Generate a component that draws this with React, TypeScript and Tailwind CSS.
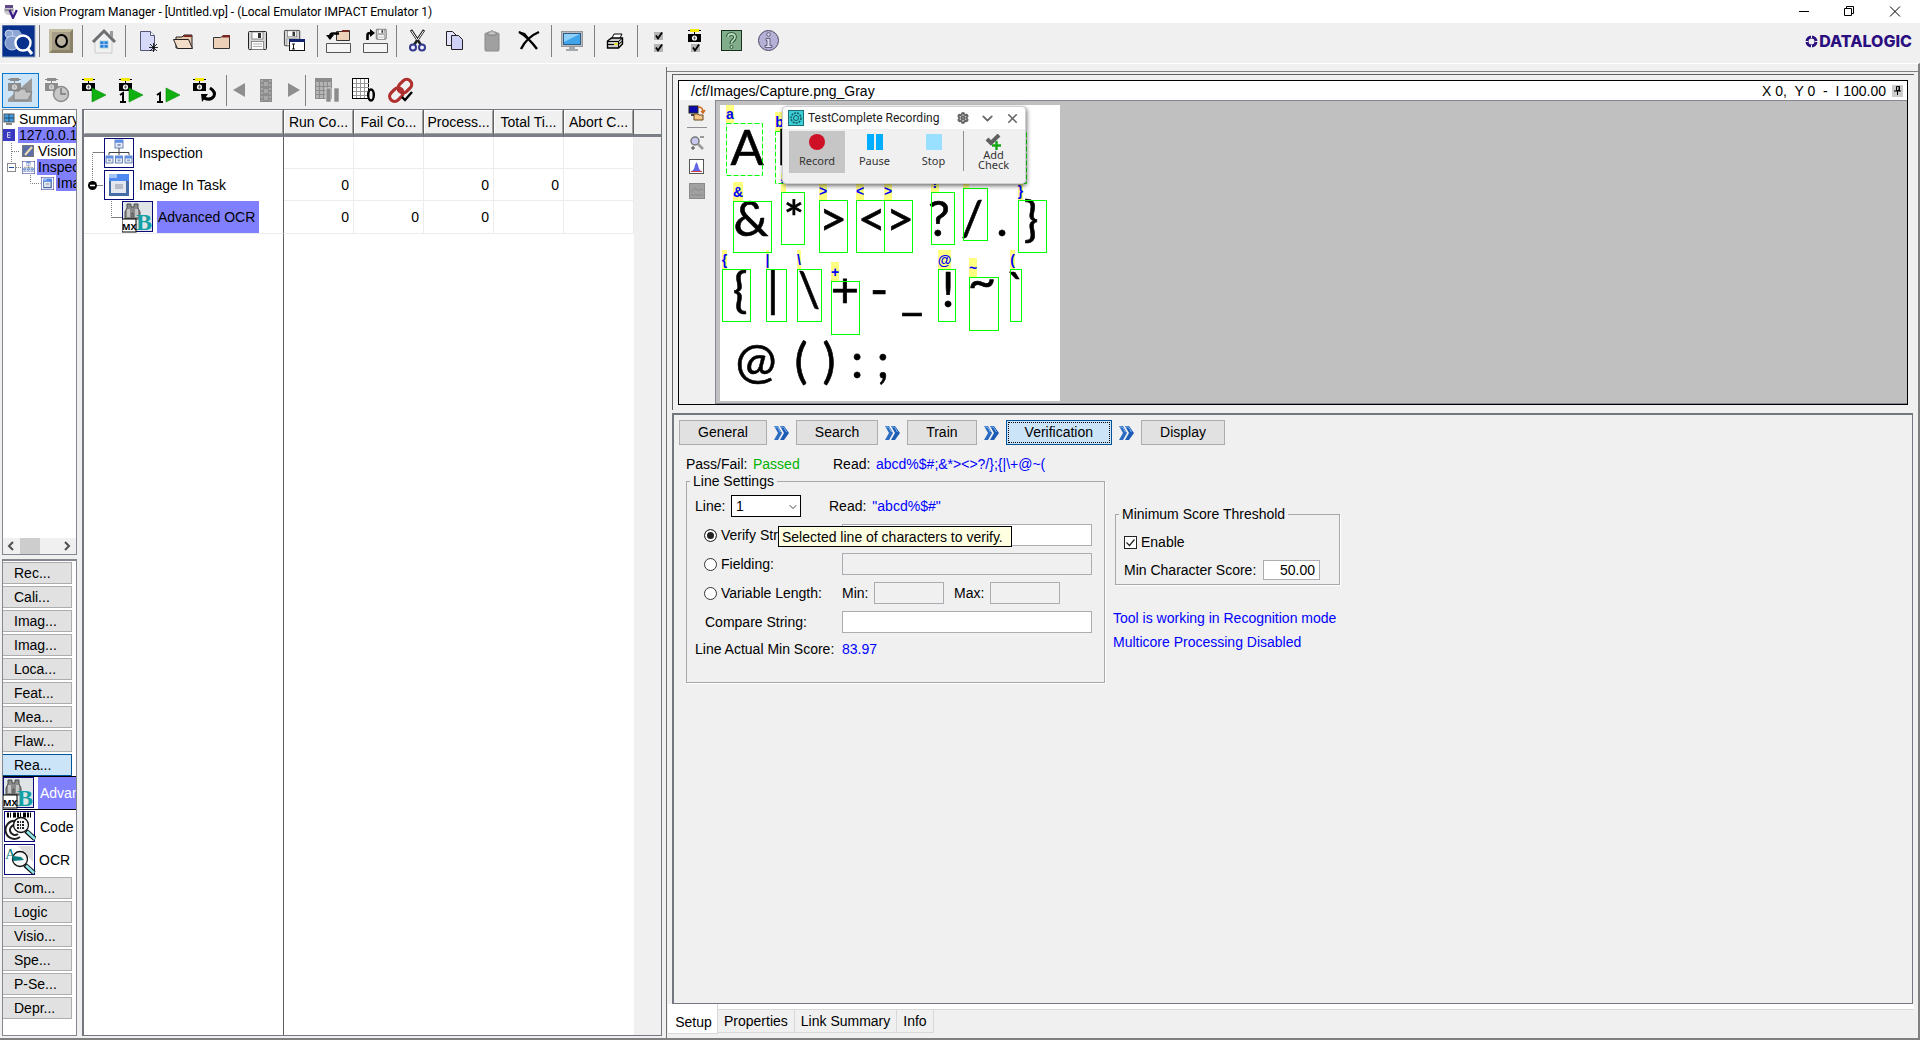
import React from 'react';
import { Settings, ChevronDown, X } from 'lucide-react';

type Kids = { children?: React.ReactNode };

/* ---------- shared icon pieces ---------- */

function Glyph({ x, y, w, h, children }: Kids & { x: number; y: number; w: number; h: number }) {
  return (
    <svg width={w} height={h} viewBox={`${x} ${y} ${w} ${h}`} className="block shrink-0" aria-hidden="true">
      {children}
    </svg>
  );
}

function Camera({ x, y, gray = false }: { x: number; y: number; gray?: boolean }) {
  const dark = gray ? '#8c8c8c' : '#000';
  return (
    <g>
      <path d={`M${x} ${y + 1.5}h13M${x + 6.5} ${y}v5`} stroke={dark} strokeWidth="1" />
      <rect x={x + 2} y={y} width="9" height="3" fill={gray ? '#8c8c8c' : '#f5e900'} />
      <rect x={x} y={y + 5} width="13" height="8" fill={dark} />
      <circle cx={x + 6.5} cy={y + 9} r="2.6" fill={gray ? '#d8d8d8' : '#fff'} />
      <path d={`M${x + 6.5} ${y + 7.4}v3.2M${x + 4.9} ${y + 9}h3.2`} stroke={gray ? '#aaa' : '#444'} strokeWidth=".8" />
    </g>
  );
}

function Play({ x, y }: { x: number; y: number }) {
  return <path d={`M${x} ${y}l14 7-14 7z`} fill="#10b010" stroke="#0a8a0a" strokeWidth=".6" />;
}

function Tick({ x, y }: { x: number; y: number }) {
  return (
    <g>
      <rect x={x} y={y} width="9" height="8" fill="#b4b4b4" />
      <path d={`M${x + 2} ${y + 3.5}l2 3 4-6`} stroke="#000" strokeWidth="1.8" fill="none" />
    </g>
  );
}

function Floppy({ x, y, s = 1 }: { x: number; y: number; s?: number }) {
  return (
    <g transform={`translate(${x} ${y}) scale(${s})`}>
      <rect x=".5" y=".5" width="18" height="18" rx="1" fill="#d4d4d4" stroke="#222" />
      <rect x="4" y="1" width="11" height="7" fill="#fff" stroke="#666" strokeWidth=".7" />
      <rect x="10" y="2" width="3" height="5" fill="#333" />
      <rect x="3.5" y="10.5" width="12" height="8" fill="#fff" stroke="#777" strokeWidth=".8" />
      <path d="M5 13h9M5 15.5h9" stroke="#999" strokeWidth=".8" />
    </g>
  );
}

function Sep() {
  return (
    <div className="flex h-8 w-[7px] shrink-0 justify-center">
      <div className="w-px bg-[#808080]" />
    </div>
  );
}

function ToolButton({ label, children, className = '' }: Kids & { label: string; className?: string }) {
  return (
    <button type="button" aria-label={label} title={label} className={'block shrink-0 ' + className}>
      {children}
    </button>
  );
}

/* ---------- title bar ---------- */

function TitleBar() {
  return (
    <header className="flex h-[23px] shrink-0 items-center bg-white pl-[3px]">
      <svg width="15" height="15" viewBox="0 0 15 15" aria-hidden="true">
        <path d="M2 1h8v3H2z" fill="#5b4a86" />
        <path d="M1 4h10v7H4L1 8z" fill="#c9c9cf" />
        <path d="M2 5h8v2H2z" fill="#8d8d99" />
        <path d="M6.5 6l3.5 8 3.8-8" stroke="#3c1d86" strokeWidth="2.2" fill="none" />
      </svg>
      <h1 className="ml-[5px] grow whitespace-nowrap font-[Roboto,sans-serif] text-[12px] leading-4 text-black">
        Vision Program Manager - [Untitled.vp] - (Local Emulator IMPACT Emulator 1)
      </h1>
      <ToolButton label="Minimize" className="w-[46px]">
        <svg width="46" height="22" viewBox="0 0 46 22"><path d="M17 10.500h10" stroke="#000" /></svg>
      </ToolButton>
      <ToolButton label="Restore" className="w-[46px]">
        <svg width="46" height="22" viewBox="0 0 46 22">
          <path d="M16.500 7.500h7v7h-7zM18.500 7.500v-2h7v7h-2" fill="none" stroke="#000" />
        </svg>
      </ToolButton>
      <ToolButton label="Close" className="w-[46px]">
        <svg width="46" height="22" viewBox="0 0 46 22"><path d="M16 5.500l10 10M26 5.500l-10 10" stroke="#000" /></svg>
      </ToolButton>
    </header>
  );
}

/* ---------- main toolbar ---------- */

function MainToolbar() {
  return (
    <div className="flex h-10 shrink-0 items-start pl-0.5 pt-0.5">
      <ToolButton label="Vision Program Manager">
        <Glyph x={2} y={25} w={34} h={33}>
          <rect x="2" y="25" width="33" height="32" fill="#06308c" stroke="#9ab" strokeWidth="1" />
          <path d="M9 30h10l3 4-3 4H8z" fill="#8ea6d4" />
          <circle cx="9" cy="34" r="4" fill="#8ea6d4" stroke="#dce6f7" strokeWidth=".8" />
          <circle cx="12" cy="43" r="7" fill="#7f9acb" stroke="#dce6f7" strokeWidth=".8" />
          <circle cx="23" cy="43" r="7.500" fill="#06308c" stroke="#fff" strokeWidth="2.400" />
          <path d="M28 49l4 5" stroke="#fff" strokeWidth="3" />
        </Glyph>
      </ToolButton>
      <Sep />
      <ToolButton label="Online">
        <Glyph x={43} y={25} w={36} h={32}>
          <rect x="49" y="29" width="24" height="24" fill="#8a8266" />
          <path d="M49 53V29h24l-3 3H52v18z" fill="#c3bb9f" />
          <rect x="52" y="32" width="18" height="18" fill="#a59d86" />
          <ellipse cx="61.500" cy="41" rx="5.500" ry="6" fill="#b8b29e" stroke="#000" strokeWidth="2" />
        </Glyph>
      </ToolButton>
      <Sep />
      <ToolButton label="Home">
        <Glyph x={86} y={25} w={36} h={32}>
          <path d="M95 39l9-8 8 8v14H95z" fill="#f1f1f1" stroke="#bbb" strokeWidth=".7" />
          <path d="M110 31h3v7l-3-3z" fill="#999" />
          <path d="M93 42l11-11 11 11" fill="none" stroke="#6d7073" strokeWidth="3" />
          <rect x="100" y="41" width="8" height="7" fill="#2f80dc" stroke="#9cc" strokeWidth=".7" />
          <path d="M104 41v7M100 44.500h8" stroke="#bfe0ff" strokeWidth=".8" />
        </Glyph>
      </ToolButton>
      <Sep />
      <ToolButton label="New">
        <Glyph x={129} y={25} w={37} h={32}>
          <path d="M140.500 31.500h10l4 4v15h-14z" fill="#d6d9f8" stroke="#55557a" />
          <path d="M150.500 31.500v4h4" fill="#fff" stroke="#55557a" />
          <path d="M149 47.500h9M153.500 43v9M150 44l7 7M157 44l-7 7" stroke="#111" strokeWidth=".9" />
        </Glyph>
      </ToolButton>
      <ToolButton label="Open">
        <Glyph x={166} y={25} w={37} h={32}>
          <path d="M176 48V37h6l2-2h8v13z" fill="#e6c9ae" stroke="#222" />
          <path d="M184 35h8v2h-9z" fill="#7a2a22" />
          <path d="M173.500 39.500h15l4 9h-15z" fill="#f2ddc9" stroke="#222" />
        </Glyph>
      </ToolButton>
      <ToolButton label="Close program">
        <Glyph x={203} y={25} w={37} h={32}>
          <path d="M213.500 48.500v-11h7l3-2h6v13z" fill="#ecd0b8" stroke="#333" />
          <path d="M223 35h7v2.500h-8z" fill="#7a2a22" />
        </Glyph>
      </ToolButton>
      <ToolButton label="Save">
        <Glyph x={240} y={25} w={37} h={32}><Floppy x={248} y={31} /></Glyph>
      </ToolButton>
      <ToolButton label="Save as">
        <Glyph x={277} y={25} w={37} h={32}>
          <Floppy x={284} y={30} s={0.85} />
          <rect x="289.500" y="39.500" width="15" height="11" fill="#fff" stroke="#111" />
          <rect x="289" y="39" width="16" height="3" fill="#14246e" />
          <path d="M292 44h3M292 49h3M293.500 44v5" stroke="#000" strokeWidth=".9" />
        </Glyph>
      </ToolButton>
      <Sep />
      <ToolButton label="Load from device">
        <Glyph x={321} y={25} w={36} h={32}>
          <path d="M336.500 40.500v-9h6l1-1h6v10z" fill="#ecd0b8" stroke="#333" />
          <path d="M342 30h7v2h-7z" fill="#7a2a22" />
          <path d="M339 33.500h-6q-3 0-3 4" fill="none" stroke="#000" strokeWidth="2.600" />
          <path d="M326 35h8l-4 5z" />
          <path d="M326.500 52.500v-9h24v9z" fill="#f4f4f4" stroke="#555" />
        </Glyph>
      </ToolButton>
      <ToolButton label="Save to device">
        <Glyph x={357} y={25} w={36} h={32}>
          <Floppy x={376} y={29} s={0.55} />
          <path d="M367.500 40v-5q0-2 3-2" fill="none" stroke="#000" strokeWidth="2.600" />
          <path d="M370 29l5 4-5 4z" />
          <path d="M363.500 52.500v-9h24v9z" fill="#f4f4f4" stroke="#555" />
        </Glyph>
      </ToolButton>
      <Sep />
      <ToolButton label="Cut">
        <Glyph x={400} y={25} w={37} h={32}>
          <path d="M411 30l10 15M424 30l-10 15" stroke="#222" strokeWidth="2.600" />
          <path d="M411.500 31l6 9M423.500 31l-6 9" stroke="#fff" strokeWidth="1" />
          <circle cx="413" cy="47.500" r="3" fill="#eef" stroke="#33398c" strokeWidth="2" />
          <circle cx="422" cy="47.500" r="3" fill="#eef" stroke="#33398c" strokeWidth="2" />
        </Glyph>
      </ToolButton>
      <ToolButton label="Copy">
        <Glyph x={437} y={25} w={37} h={32}>
          <path d="M446.500 31.500h6l4 4v10h-10z" fill="#e3e4fb" stroke="#222" />
          <path d="M451.500 35.500h7l4 4v10h-11z" fill="#cfd2f6" stroke="#222" />
        </Glyph>
      </ToolButton>
      <ToolButton label="Paste">
        <Glyph x={474} y={25} w={37} h={32}>
          <rect x="485" y="33" width="14" height="18" rx="1" fill="#a0a0a0" stroke="#8a8a8a" />
          <path d="M488 35v-3h2q2-3 4 0h2v3z" fill="#c5c5c5" stroke="#777" strokeWidth=".8" />
        </Glyph>
      </ToolButton>
      <ToolButton label="Delete">
        <Glyph x={511} y={25} w={37} h={32}>
          <path d="M519 32q9 5 18 17M539 32q-12 5-18 17" fill="none" stroke="#000" strokeWidth="2.400" />
          <path d="M518 31l7 2 5 6z" />
        </Glyph>
      </ToolButton>
      <Sep />
      <ToolButton label="Display">
        <Glyph x={555} y={25} w={36} h={32}>
          <rect x="561.500" y="31.500" width="21" height="15" fill="#b9bdc2" stroke="#999" />
          <rect x="563.500" y="33.500" width="17" height="11" fill="#3fa4ea" stroke="#2b5b86" />
          <path d="M564 34h16l-16 8z" fill="#8fd0fb" />
          <path d="M569 47h6v2h-6zM566 49h12v2h-12z" fill="#a5a8ac" />
        </Glyph>
      </ToolButton>
      <Sep />
      <ToolButton label="Print">
        <Glyph x={598} y={25} w={36} h={32}>
          <path d="M611 40l3-6h8l-3 6z" fill="#fff" stroke="#000" />
          <path d="M607.500 41l4-3h11v6l-4 4h-11z" fill="#ccc" stroke="#000" strokeWidth="1.400" />
          <path d="M607.500 41.500h11l3.500-3M608 44.500h10l4-3M618.500 41v7" fill="none" stroke="#000" />
          <rect x="614" y="43" width="4" height="2" fill="#e8dc30" />
        </Glyph>
      </ToolButton>
      <Sep />
      <ToolButton label="Check all">
        <Glyph x={641} y={25} w={37} h={32}><Tick x={654} y={32} /><Tick x={654} y={44} /></Glyph>
      </ToolButton>
      <ToolButton label="Check camera">
        <Glyph x={678} y={25} w={37} h={32}><Camera x={688} y={29} /><Tick x={691} y={44} /></Glyph>
      </ToolButton>
      <ToolButton label="Help">
        <Glyph x={715} y={25} w={37} h={32}>
          <rect x="721.500" y="30.500" width="20" height="20" fill="#82ad8b" stroke="#16321d" />
          <path d="M728 37q0-3 3.500-3t3.500 3q0 2-2 3.500t-1.500 3" fill="none" stroke="#234a2c" strokeWidth="3.600" />
          <path d="M728 37q0-3 3.500-3t3.500 3q0 2-2 3.500t-1.500 3" fill="none" stroke="#b8dcbf" strokeWidth="1.800" />
          <circle cx="731.500" cy="47" r="1.500" fill="#b8dcbf" stroke="#234a2c" strokeWidth=".8" />
        </Glyph>
      </ToolButton>
      <ToolButton label="About">
        <Glyph x={752} y={25} w={37} h={32}>
          <circle cx="768.500" cy="40.500" r="10" fill="#b4b0d6" stroke="#4c4a66" />
          <circle cx="768.500" cy="34.500" r="1.800" fill="#dcd9f2" stroke="#4c4a66" strokeWidth=".8" />
          <path d="M766 38.500h4v7h2v2h-7v-2h2v-5h-1z" fill="#dcd9f2" stroke="#4c4a66" strokeWidth=".8" />
        </Glyph>
      </ToolButton>
      <div className="mt-[7px] ml-auto mr-2 flex items-center gap-px text-[#2b0f80]">
        <svg width="13" height="13" viewBox="0 0 13 13" aria-hidden="true">
          <circle cx="6.500" cy="6.500" r="4.500" fill="none" stroke="currentColor" strokeWidth="3" />
          <path d="M6.500 0v3M6.500 10v3M0 6.500h3M10 6.500h3" stroke="#f0f0f0" strokeWidth="1" />
        </svg>
        <span className="font-[Inter,sans-serif] text-[16px] font-extrabold leading-[18px]">DATALOGIC</span>
      </div>
    </div>
  );
}

/* ---------- run toolbar ---------- */

function RunToolbar() {
  return (
    <div className="flex h-[45px] shrink-0 items-end pb-px pl-0.5">
      <ToolButton label="Image source" className="border border-[#0078d7] bg-[#cce4f7]">
        <Glyph x={3} y={74} w={35} h={33}>
          <path d="M8 102V99l24-21v24z" fill="#9a9a9a" />
          <Camera x={8} y={78} gray />
          <path d="M14 100v-9h5l2-2h5v3h6l-4 8z" fill="#c4c4c4" stroke="#7d7d7d" />
        </Glyph>
      </ToolButton>
      <ToolButton label="Schedule">
        <Glyph x={39} y={73} w={37} h={35}>
          <Camera x={45} y={78} gray />
          <circle cx="61" cy="94" r="7.500" fill="#c8c8c8" stroke="#8c8c8c" strokeWidth="1.500" />
          <path d="M61 88v6h5" fill="none" stroke="#777" strokeWidth="1.400" />
        </Glyph>
      </ToolButton>
      <ToolButton label="Run continuously"><Glyph x={76} y={73} w={37} h={35}><Camera x={82} y={78} /><Play x={92} y={88} /></Glyph></ToolButton>
      <ToolButton label="Run once with acquire">
        <Glyph x={113} y={73} w={37} h={35}>
          <Camera x={119} y={78} /><Play x={129} y={88} />
          <path d="M120 95l3-2v9M120 102h6" stroke="#000" strokeWidth="2" fill="none" />
        </Glyph>
      </ToolButton>
      <ToolButton label="Run once">
        <Glyph x={150} y={73} w={37} h={35}>
          <Play x={166} y={88} />
          <path d="M157 95l3-2v9M157 102h6" stroke="#000" strokeWidth="2" fill="none" />
        </Glyph>
      </ToolButton>
      <ToolButton label="Repeat">
        <Glyph x={187} y={73} w={37} h={35}>
          <Camera x={193} y={78} />
          <path d="M210 88q6 4 4 8-3 5-10 2" fill="none" stroke="#000" strokeWidth="3" />
          <path d="M201 94h7l-6 8z" />
        </Glyph>
      </ToolButton>
      <Glyph x={224} y={73} w={5} h={35}><path d="M226.500 75v31" stroke="#808080" /></Glyph>
      <ToolButton label="Previous image"><Glyph x={229} y={73} w={24} h={35}><path d="M245 83v14l-12-7z" fill="#8e8e8e" /></Glyph></ToolButton>
      <ToolButton label="Film strip">
        <Glyph x={253} y={73} w={27} h={35}>
          <rect x="260" y="79" width="12" height="23" fill="#8c8c8c" />
          <path d="M262 80v21M270 80v21" stroke="#c4c4c4" strokeDasharray="2 2" />
          <path d="M264 82h4v4h-4zM264 89h4v4h-4zM264 96h4v4h-4z" fill="#a8a8a8" />
        </Glyph>
      </ToolButton>
      <ToolButton label="Next image"><Glyph x={280} y={73} w={23} h={35}><path d="M288 83v14l12-7z" fill="#8e8e8e" /></Glyph></ToolButton>
      <Glyph x={303} y={73} w={6} h={35}><path d="M305.500 75v31" stroke="#808080" /></Glyph>
      <ToolButton label="Pause statistics">
        <Glyph x={309} y={73} w={37} h={35}>
          <rect x="315.500" y="78.500" width="16" height="20" fill="#b4b4b4" stroke="#8c8c8c" />
          <path d="M316 80.500h16" stroke="#8c8c8c" strokeWidth="3" />
          <path d="M319.500 79v19M323.500 79v19M327.500 79v19M316 86.500h16M316 90.500h16M316 94.500h16" stroke="#8c8c8c" />
          <path d="M326 88h5v14h-5zM334 88h5v14h-5z" fill="#8c8c8c" stroke="#f0f0f0" strokeWidth=".6" />
        </Glyph>
      </ToolButton>
      <ToolButton label="Reset statistics">
        <Glyph x={346} y={73} w={37} h={35}>
          <rect x="352.500" y="78.500" width="16" height="20" fill="#fff" stroke="#000" />
          <path d="M356.500 79v19M360.500 79v19M364.500 79v19M353 83.500h16M353 87.500h16M353 91.500h16M353 95.500h16" stroke="#999" />
          <ellipse cx="371" cy="95" rx="2.800" ry="5.500" fill="#f0f0f0" stroke="#000" strokeWidth="2.400" />
        </Glyph>
      </ToolButton>
      <ToolButton label="Validate links">
        <Glyph x={383} y={73} w={37} h={35}>
          <g transform="rotate(-45 401 90)" fill="none" stroke="#b03030" strokeWidth="3.200">
            <rect x="387" y="85" width="15" height="10" rx="5" />
            <rect x="399" y="85" width="15" height="10" rx="5" />
          </g>
          <path d="M402 97l3 3 7-8" fill="none" stroke="#000" strokeWidth="2.400" />
        </Glyph>
      </ToolButton>
    </div>
  );
}

/* ---------- pictures for tasks and tools ---------- */

function MiniWindow({ x, y, w, h }: { x: number; y: number; w: number; h: number }) {
  return (
    <g>
      <rect x={x} y={y} width={w} height={h} fill="#e8ecf4" stroke="#4a68a8" strokeWidth=".8" />
      <rect x={x} y={y} width={w} height={h * 0.35} fill="#5d8fe6" />
      <rect x={x + w * 0.3} y={y + h * 0.5} width={w * 0.4} height={h * 0.25} fill="#8c9cc0" />
    </g>
  );
}

function InspectionPic({ size }: { size: number }) {
  return (
    <svg width={size} height={size} viewBox="0 0 30 30" className="block shrink-0" aria-hidden="true">
      <rect x=".5" y=".5" width="29" height="29" fill="#fff" stroke="#0a0a78" />
      <path d="M15 10v7M5 17v-2.500h20V17" stroke="#444" fill="none" />
      <MiniWindow x={11} y={2} w={8} h={8} />
      <MiniWindow x={2} y={18} w={7} h={7} />
      <MiniWindow x={11.5} y={18} w={7} h={7} />
      <MiniWindow x={21} y={18} w={7} h={7} />
    </svg>
  );
}

function TaskPic({ size }: { size: number }) {
  return (
    <svg width={size} height={size} viewBox="0 0 30 30" className="block shrink-0" aria-hidden="true">
      <rect x=".5" y=".5" width="29" height="29" fill="#fff" stroke="#0a0a78" />
      <rect x="5" y="4" width="20" height="22" fill="#466ca8" />
      <rect x="5" y="4" width="20" height="7" fill="#4f8af0" />
      <rect x="5" y="4" width="8" height="4" fill="#a4c4f8" />
      <rect x="7" y="11" width="15" height="12" fill="#e4e8ee" />
      <rect x="11" y="14" width="8" height="5" fill="#b6bcc8" />
    </svg>
  );
}

function OcrPic() {
  return (
    <svg width="32" height="32" viewBox="0 0 32 32" className="block shrink-0" aria-hidden="true">
      <rect x=".5" y=".5" width="30" height="30" fill="#dfe5e6" stroke="#0a0a78" />
      <path d="M5 3h4v3h3V3h4v4l2 4v7h-7v-6h-1v6H3v-7l2-4z" fill="#8a8a8a" stroke="#4d4d4d" />
      <path d="M5 8h3v8H5zM13 8h3v8h-3z" fill="#c4c4c4" />
      <text x="14" y="29" fontFamily="Liberation Serif, serif" fontWeight="700" fontSize="24" fill="#12a0a4">B</text>
      <rect x="0" y="18" width="14" height="13" fill="#fff" stroke="#000" />
      <text x="0" y="29" fontFamily="Noto Sans, sans-serif" fontWeight="700" fontSize="9">MX</text>
    </svg>
  );
}

function Lens({ cx, cy }: { cx: number; cy: number }) {
  return (
    <g>
      <path d={`M${cx + 5} ${cy + 6}l9 8`} stroke="#111" strokeWidth="5" />
      <path d={`M${cx + 6} ${cy + 6.5}l8 7.500`} stroke="#8fe6ea" strokeWidth="2.600" />
      <circle cx={cx} cy={cy} r="7.500" fill="#f4f4f4" fillOpacity=".85" stroke="#111" strokeWidth="1.300" />
    </g>
  );
}

function CodePic() {
  return (
    <svg width="32" height="32" viewBox="0 0 32 32" className="block shrink-0" aria-hidden="true">
      <rect x=".5" y=".5" width="30" height="30" fill="#fff" stroke="#0a0a78" />
      <path d="M3 4h26" stroke="#000" strokeWidth="5" strokeDasharray="2 1 1 2 3 1" />
      <path d="M12 10a9 9 0 1 0 4 16M11 14a5 5 0 1 0 3 9" stroke="#222" strokeWidth="2" fill="none" />
      <Lens cx={17} cy={14} />
      <path d="M13 11h8M13 14h8M13 17h8" stroke="#222" strokeWidth="2" strokeDasharray="2 1 1 1" />
    </svg>
  );
}

function FindTextPic() {
  return (
    <svg width="32" height="32" viewBox="0 0 32 32" className="block shrink-0" aria-hidden="true">
      <rect x=".5" y=".5" width="30" height="30" fill="#fff" stroke="#0a0a78" />
      <path d="M14 2h15v16z" fill="#ddd" />
      <Lens cx={16} cy={15} />
      <text x="1" y="15" fontFamily="Liberation Serif, serif" fontSize="15" fill="#0a7d80">A</text>
      <path d="M9 12l8 1 3 3-11 1z" fill="#0a7d80" />
    </svg>
  );
}

/* ---------- left column ---------- */

function TreePanel() {
  const row = 'flex h-4 items-center whitespace-nowrap leading-4';
  return (
    <section className="flex h-[446px] shrink-0 flex-col overflow-hidden border border-[#828790] bg-white pt-px">
      <div className={row}>
        <svg className="shrink-0" width="15" height="16" viewBox="0 0 15 16">
          <rect x="1" y="3" width="10" height="8" fill="#3f9be0" stroke="#555" /><path d="M1 7h10M6 3v8" stroke="#1c3a55" strokeWidth=".8" /><path d="M3 13h6" stroke="#888" strokeWidth="2" />
        </svg>
        <span className="px-px">Summary</span>
      </div>
      <div className={row}>
        <svg className="shrink-0" width="15" height="16" viewBox="0 0 15 16"><rect width="12" height="12" y="2" fill="#3838c0" /><path d="M7.500 5.500h-3v5h3M4.500 8h3" stroke="#dde" fill="none" strokeWidth=".9" /></svg>
        <span className="bg-[#8080ff] px-px">127.0.0.1</span>
      </div>
      <div className={row}>
        <svg className="shrink-0" width="34" height="16" viewBox="0 0 34 16">
          <path d="M8.500 0v16M9 8.500h8" stroke="#808080" strokeDasharray="1 1" />
          <rect x="19.500" y="2.500" width="11" height="11" fill="#5c6ea8" stroke="#777" /><path d="M22 12l7-8" stroke="#f0e0b0" strokeWidth="2" />
        </svg>
        <span className="px-px">Vision</span>
      </div>
      <div className={row}>
        <svg className="shrink-0" width="19" height="16" viewBox="0 0 19 16">
          <path d="M8.500 0v4M13 8.500h5" stroke="#808080" strokeDasharray="1 1" />
          <rect x="4.500" y="4.500" width="8" height="8" fill="#fff" stroke="#888" /><path d="M6 8.500h5" stroke="#244a9c" />
        </svg>
        <InspectionPic size={13} />
        <span className="ml-0.5 bg-[#8080ff] px-px">Inspection</span>
      </div>
      <div className={row}>
        <svg className="shrink-0" width="38" height="16" viewBox="0 0 38 16"><path d="M27.500 0v8.500h10" fill="none" stroke="#808080" strokeDasharray="1 1" /></svg>
        <TaskPic size={13} />
        <span className="ml-0.5 bg-[#8080ff] px-px">Image In Task</span>
      </div>
      <div className="mt-auto flex h-4 items-center bg-[#f0f0f0]">
        <svg width="17" height="16" viewBox="0 0 17 16"><path d="M10 4l-4 4 4 4" fill="none" stroke="#505050" strokeWidth="2" /></svg>
        <div className="h-4 w-5 bg-[#cdcdcd]" />
        <svg width="17" height="16" viewBox="0 0 17 16" className="ml-auto"><path d="M6 4l4 4-4 4" fill="none" stroke="#505050" strokeWidth="2" /></svg>
      </div>
    </section>
  );
}

function PaletteButton({ children, active = false }: Kids & { active?: boolean }) {
  return (
    <button
      type="button"
      className={
        'mb-0.5 block h-[22px] w-[69px] shrink-0 border border-l-0 pl-[11px] text-left leading-5 ' +
        (active ? 'border-[#005499] bg-[#cce4f7]' : 'border-[#adadad] bg-[#e1e1e1]')
      }
    >
      {children}
    </button>
  );
}

function Palette() {
  return (
    <section className="flex min-h-0 grow flex-col overflow-hidden whitespace-nowrap border border-t-2 border-[#828790] bg-white pt-px">
      {['Rec...', 'Cali...', 'Imag...', 'Imag...', 'Loca...', 'Feat...', 'Mea...', 'Flaw...'].map((t, i) => (
        <PaletteButton key={i}>{t}</PaletteButton>
      ))}
      <PaletteButton active>Rea...</PaletteButton>
      <button type="button" className="-mt-0.5 flex h-[34px] shrink-0 items-center border-y border-black">
        <OcrPic />
        <span className="ml-[3px] bg-[#8080ff] pl-0.5 leading-8 text-white">Advanced OCR</span>
      </button>
      <button type="button" className="flex h-[33px] shrink-0 items-center pl-px"><CodePic /><span className="ml-1">Code</span></button>
      <button type="button" className="mb-px flex h-[33px] shrink-0 items-center pl-px"><FindTextPic /><span className="ml-[3px]">OCR</span></button>
      {['Com...', 'Logic', 'Visio...', 'Spe...', 'P-Se...', 'Depr...'].map((t) => (
        <PaletteButton key={t}>{t}</PaletteButton>
      ))}
    </section>
  );
}

/* ---------- program table ---------- */

const rows = [
  { name: 'Inspection', values: ['', '', '', '', ''] },
  { name: 'Image In Task', values: ['0', '', '0', '0', ''] },
  { name: 'Advanced OCR', values: ['0', '0', '0', '', ''] },
];

function ProgramTable() {
  return (
    <section className="mr-0.5 flex min-w-0 grow flex-col border border-l-2 border-[#73777f] bg-white">
      <table className="w-full table-fixed border-separate border-spacing-0">
        <colgroup>
          <col className="w-[200px]" />
          <col className="w-[70px]" /><col className="w-[70px]" /><col className="w-[70px]" /><col className="w-[70px]" /><col className="w-[70px]" />
          <col />
        </colgroup>
        <thead>
          <tr className="h-[27px]">
            {['', 'Run Co...', 'Fail Co...', 'Process...', 'Total Ti...', 'Abort C...'].map((h, i) => (
              <th key={i} className="border-b-[3px] border-r border-b-[#7b7f87] border-r-[#606060] bg-[#f0f0f0] p-0 font-normal">
                <div className="h-6 border-b border-l border-r border-t border-b-[#a0a0a0] border-l-white border-r-[#a0a0a0] border-t-white leading-[22px]">{h}</div>
              </th>
            ))}
            <th className="border-b-[3px] border-b-[#7b7f87] bg-[#f0f0f0] p-0" />
          </tr>
        </thead>
        <tbody>
          {rows.map((r, i) => (
            <tr key={r.name} className="h-8">
              <td className={'border-r border-r-[#606060] p-0 ' + (i === 2 ? 'border-b border-b-[#ececec]' : '')}>
                <div className="flex h-8 items-center">
                  {i === 0 && <svg width="20" height="32" viewBox="0 0 20 32"><path d="M8.500 32V15.500" stroke="#808080" strokeDasharray="1 1" /><path d="M9 15.500h11" stroke="#808080" /></svg>}
                  {i === 1 && (
                    <svg width="20" height="32" viewBox="0 0 20 32">
                      <path d="M8.500 0v16" stroke="#808080" strokeDasharray="1 1" /><path d="M12 16.500h7" stroke="#808080" />
                      <circle cx="8.500" cy="16.500" r="4.500" /><path d="M6 16.500h5" stroke="#fff" strokeWidth="1.500" />
                    </svg>
                  )}
                  {i === 2 && <svg width="38" height="32" viewBox="0 0 38 32"><path d="M27.500 0v16" stroke="#808080" strokeDasharray="1 1" /><path d="M27 16.500h11" stroke="#808080" /></svg>}
                  {i === 0 && <InspectionPic size={30} />}
                  {i === 1 && <TaskPic size={30} />}
                  {i === 2 && <OcrPic />}
                  <span className={i === 2 ? 'ml-[3px] bg-[#8080ff] pl-px pr-1 leading-8' : 'ml-1 px-px'}>{r.name}</span>
                </div>
              </td>
              {r.values.map((v, j) => (
                <td key={j} className="border-b border-r border-[#ececec] p-0 pr-1 text-right">{v}</td>
              ))}
              <td className="bg-[#f0f0f0] p-0" />
            </tr>
          ))}
        </tbody>
      </table>
      <div className="flex grow">
        <div className="w-[200px] border-r border-[#606060]" />
        <div className="w-[350px]" />
        <div className="grow bg-[#f0f0f0]" />
      </div>
    </section>
  );
}

/* ---------- captured image with found characters ---------- */

const glyphs: [string, number, number][] = [
  ['A', 747, 165], ['b', 791, 165],
  ['&', 751, 236], ['*', 794, 236], ['>', 833, 236], ['<', 872, 236], ['>', 900, 236], ['?', 939, 236], ['/', 972, 236], ['.', 1002, 236], ['}', 1031, 236],
  ['{', 740, 307], ['|', 773, 307], ['\\', 809, 307], ['+', 845, 307], ['-', 879, 307], ['_', 912, 309], ['!', 948, 307], ['~', 982, 298], ['`', 1016, 307],
  ['@', 756, 378], ['(', 801, 378], [')', 829, 378], [':', 857, 378], [';', 883, 378],
];

const boxes: { t: string; x: number; y: number; w: number; h: number; lw: number; dash?: boolean }[] = [
  { t: 'a', x: 726, y: 123, w: 36, h: 52, lw: 8, dash: true },
  { t: 'b', x: 775, y: 131, w: 34, h: 52, lw: 9, dash: true },
  { t: '', x: 818, y: 131, w: 30, h: 52, lw: 0, dash: true },
  { t: '', x: 992, y: 131, w: 34, h: 52, lw: 0, dash: true },
  { t: '&', x: 733, y: 201, w: 38, h: 51, lw: 10 },
  { t: '*', x: 781, y: 192, w: 23, h: 52, lw: 5 },
  { t: '>', x: 819, y: 200, w: 28, h: 52, lw: 8 },
  { t: '<', x: 856, y: 200, w: 28, h: 52, lw: 8 },
  { t: '>', x: 884, y: 200, w: 28, h: 52, lw: 8 },
  { t: '?', x: 931, y: 192, w: 23, h: 52, lw: 8 },
  { t: '/', x: 963, y: 188, w: 24, h: 52, lw: 6 },
  { t: '}', x: 1018, y: 200, w: 28, h: 52, lw: 5 },
  { t: '{', x: 722, y: 269, w: 28, h: 52, lw: 5 },
  { t: '|', x: 766, y: 269, w: 20, h: 52, lw: 3 },
  { t: '\\', x: 797, y: 269, w: 24, h: 52, lw: 4 },
  { t: '+', x: 831, y: 281, w: 28, h: 53, lw: 8 },
  { t: '@', x: 938, y: 269, w: 17, h: 52, lw: 13 },
  { t: '~', x: 969, y: 277, w: 29, h: 53, lw: 8 },
  { t: '(', x: 1010, y: 269, w: 11, h: 52, lw: 5 },
];

function CapturedImage() {
  return (
    <svg width="340" height="296" viewBox="720 105 340 296" className="block bg-white" role="img" aria-label="Captured characters">
      {boxes.map((b, i) => (b.t ? <rect key={i} x={b.x} y={b.y - 19} width={b.lw} height="19" fill="#ffff80" /> : null))}
      <g fontFamily="Lato, sans-serif" fontSize="49" textAnchor="middle" fill="#000" stroke="#000" strokeWidth=".6">
        {glyphs.map(([c, x, y], i) => (
          <text key={i} x={x} y={y}>{c}</text>
        ))}
      </g>
      {boxes.map((b, i) => (
        <rect key={i} x={b.x + 0.5} y={b.y + 0.5} width={b.w} height={b.h} fill="none" stroke="#00ff00" strokeDasharray={b.dash ? '5 2' : undefined} />
      ))}
      <g fontFamily="Liberation Sans, sans-serif" fontSize="14" fontWeight="700" textAnchor="middle" fill="#0000ff">
        {boxes.map((b, i) => (b.t ? <text key={i} x={b.x + b.lw / 2} y={b.y - 4}>{b.t}</text> : null))}
      </g>
    </svg>
  );
}

function Recorder() {
  const label = "font-['Noto_Sans',sans-serif] text-[11px] leading-[14px] text-[#333]";
  return (
    <div className="absolute left-[66px] top-[5px] w-[244px] rounded-[4px] border border-[#d0d0d0] bg-[#f0f0f0] shadow-[1px_2px_4px_rgba(0,0,0,0.55)]">
      <div className="flex h-[22px] items-center rounded-t-[4px] bg-white pl-[5px]">
        <svg width="16" height="16" viewBox="0 0 16 16" aria-hidden="true">
          <rect x=".5" y=".5" width="15" height="15" fill="#3ccfd8" stroke="#1c6c72" />
          <circle cx="8" cy="8" r="5" fill="none" stroke="#14585e" strokeWidth="1.500" strokeDasharray="2 1" />
          <circle cx="8" cy="8" r="2.500" fill="none" stroke="#14585e" />
        </svg>
        <span className="ml-1 grow whitespace-nowrap font-[Roboto,sans-serif] text-[12px] leading-4 text-[#222]">TestComplete Recording</span>
        <button type="button" aria-label="Settings" className="flex w-[25px] justify-center text-[#666]"><Settings size={12} strokeWidth={4} /></button>
        <button type="button" aria-label="Collapse" className="flex w-[25px] justify-center text-[#666]"><ChevronDown size={17} strokeWidth={2.5} /></button>
        <button type="button" aria-label="Close recorder" className="flex w-[25px] justify-center text-[#666]"><X size={15} strokeWidth={2.5} /></button>
      </div>
      <div className="flex h-[54px] items-start pt-0.5">
        <button type="button" className="ml-1.5 flex h-[42px] w-14 flex-col items-center bg-[#c6c6c6] pt-[3px]">
          <svg width="16" height="16" viewBox="0 0 16 16"><circle cx="8" cy="8" r="8" fill="#ce1126" /></svg>
          <span className={'mt-1 ' + label}>Record</span>
        </button>
        <button type="button" className="flex h-[42px] w-[59px] flex-col items-center pt-[3px]">
          <svg width="16" height="16" viewBox="0 0 16 16"><path d="M0 0h7v16H0zM9 0h7v16H9z" fill="#00aeff" /></svg>
          <span className={'mt-1 ' + label}>Pause</span>
        </button>
        <button type="button" className="flex h-[42px] w-[59px] flex-col items-center pt-[3px]">
          <svg width="16" height="16" viewBox="0 0 16 16"><path d="M0 0h16v16H0z" fill="#99dfff" /></svg>
          <span className={'mt-1 ' + label}>Stop</span>
        </button>
        <div className="h-10 w-px bg-[#909090]" />
        <button type="button" className="flex h-[42px] w-[59px] flex-col items-center pt-[3px]">
          <svg width="18" height="16" viewBox="0 0 18 16"><path d="M2 5l4 4 8-8" fill="none" stroke="#606060" strokeWidth="4" /><path d="M11.500 7v9M7 11.500h9" stroke="#14a514" strokeWidth="2.400" /></svg>
          <span className="font-['Noto_Sans',sans-serif] text-[11px] leading-[10px] text-[#333]">Add<br />Check</span>
        </button>
      </div>
    </div>
  );
}

function ImagePane() {
  return (
    <section className="mr-1 border-l border-t border-[#606060] py-[5px] pl-[5px] pr-1.5">
      <div className="flex h-[325px] flex-col border border-black bg-white">
        <div className="flex h-[19px] shrink-0 items-center pl-3 pr-1 leading-[19px]">
          <span className="pt-0.5">/cf/Images/Capture.png_Gray</span>
          <span className="ml-auto whitespace-pre pt-0.5">X 0,  Y 0  -  I 100.00</span>
          <button type="button" aria-label="Pin" className="ml-1.5 flex h-3 w-[11px] items-center justify-center bg-[#ccc]">
            <svg width="9" height="11" viewBox="0 0 9 11"><path d="M3.500 1.500h3v4h-3zM1 6h7M4.500 6v4M6 1v5" fill="none" stroke="#000" /></svg>
          </button>
        </div>
        <div className="flex min-h-0 grow">
          <div className="flex w-9 shrink-0 flex-col items-center bg-[#f0f0f0] pt-[5px]">
            <ToolButton label="Swap image">
              <svg width="18" height="16" viewBox="0 0 18 16"><rect x="1" y="1" width="9" height="7" fill="#0a0ab0" stroke="#222" /><path d="M3 10h6" stroke="#444" strokeWidth="2" /><path d="M6 9h4l1 1h4v5H6z" fill="#f4c88a" stroke="#6b4518" /><path d="M10 2q5 0 5 5M13 6l2 2 2-3" fill="none" stroke="#d06a20" strokeWidth="1.500" /></svg>
            </ToolButton>
            <div className="mt-1.5 h-px w-5 bg-[#909090]" />
            <ToolButton label="Zoom" className="mt-[7px]">
              <svg width="16" height="16" viewBox="0 0 16 16"><circle cx="6" cy="6" r="4" fill="#c9c9f0" stroke="#777" strokeWidth="1.500" /><path d="M9 9l5 5" stroke="#999" strokeWidth="2.500" /><path d="M11 2h4M2 13h4M4 11v4" stroke="#444" /></svg>
            </ToolButton>
            <ToolButton label="Histogram" className="mt-2">
              <svg width="16" height="16" viewBox="0 0 16 16"><rect x=".5" y=".5" width="14" height="14" fill="#fff" stroke="#555" /><path d="M2 12q3 0 4-6l1.500-3L9 6q1 6 4 6z" fill="#6464e8" /><path d="M2 12.500h11" stroke="#d04040" /></svg>
            </ToolButton>
            <ToolButton label="Profile" className="mt-2">
              <svg width="16" height="16" viewBox="0 0 16 16"><rect x=".5" y=".5" width="15" height="15" fill="#a0a0a0" stroke="#8a8a8a" /><path d="M2 9l4-4 3 3 2-2 3 1M2 12h12" fill="none" stroke="#8a8a8a" /></svg>
            </ToolButton>
          </div>
          <div className="relative min-w-0 grow border border-r-0 border-[#828790] bg-[#c0c0c0] pl-1 pt-1">
            <CapturedImage />
            <Recorder />
          </div>
        </div>
      </div>
    </section>
  );
}

/* ---------- verification settings ---------- */

function StepArrow() {
  return (
    <svg width="29" height="14" viewBox="0 0 29 14" className="block shrink-0" aria-hidden="true">
      <path d="M7 0h4l4 7-4 7H7l4-7z" fill="#2b6cc0" />
      <path d="M13 0h4l5 7-5 7h-4l4-7z" fill="#1d5cb4" />
      <path d="M8 1h2.500l3 5M14 1h2.500l3 5" fill="none" stroke="#7db4ee" />
    </svg>
  );
}

function Step({ children, active = false }: Kids & { active?: boolean }) {
  return (
    <button
      type="button"
      className={
        'h-[25px] border px-px ' +
        (active ? 'border-[#005499] bg-[#cce4f7]' : 'border-[#adadad] bg-[#e1e1e1]')
      }
    >
      <span className={'block border px-4 leading-[19px] ' + (active ? 'border-dotted border-black' : 'border-transparent')}>{children}</span>
    </button>
  );
}

const field = 'h-[22px] border border-[#abadb3] bg-white px-1 outline-none disabled:bg-[#f0f0f0]';

function Radio({ id, checked = false }: { id: string; checked?: boolean }) {
  return (
    <input
      id={id}
      type="radio"
      name="mode"
      defaultChecked={checked}
      className="mr-1 h-[13px] w-[13px] shrink-0 appearance-none rounded-full border border-[#333] bg-white checked:bg-[#222] checked:shadow-[inset_0_0_0_2px_#fff]"
    />
  );
}

function LineSettings() {
  const row = 'flex h-[22px] items-center';
  return (
    <fieldset className="flex w-[419px] shrink-0 flex-col border border-[#a8a8a8] pb-6 pl-2 shadow-[1px_1px_0_#fff]">
      <legend className="-ml-[5px] px-[3px] leading-4">Line Settings</legend>
      <div className="flex flex-col gap-[7px] pt-1.5">
        <div className={row}>
          <label htmlFor="line" className="w-9">Line:</label>
          <div className="relative h-[22px] w-[70px]">
            <select id="line" className="h-full w-full appearance-none border border-black bg-white pl-1 outline-none">
              <option>1</option>
            </select>
            <ChevronDown size={12} className="pointer-events-none absolute right-0.5 top-1.5 text-[#444]" />
          </div>
          <span className="ml-7">Read:</span>
          <span className="ml-1.5 text-[#0000ff]">"abcd%$#"</span>
        </div>
        <div className={row + ' relative'}>
          <div className="flex w-[147px] items-center pl-[9px]">
            <Radio id="verify" checked />
            <label htmlFor="verify">Verify String:</label>
          </div>
          <input aria-label="Verify string" className={field + ' w-[250px]'} />
          <div role="tooltip" className="absolute left-[83px] top-0.5 z-10 h-[21px] w-[234px] whitespace-nowrap border border-black bg-[#ffffe1] px-[3px] leading-5">
            Selected line of characters to verify.
          </div>
        </div>
        <div className={row}>
          <div className="flex w-[147px] items-center pl-[9px]">
            <Radio id="fielding" />
            <label htmlFor="fielding">Fielding:</label>
          </div>
          <input aria-label="Fielding pattern" disabled className={field + ' w-[250px]'} />
        </div>
        <div className={row}>
          <div className="flex w-[147px] items-center pl-[9px]">
            <Radio id="variable" />
            <label htmlFor="variable">Variable Length:</label>
          </div>
          <label htmlFor="min" className="w-8">Min:</label>
          <input id="min" disabled className={field + ' w-[70px]'} />
          <label htmlFor="max" className="ml-2.5 w-9">Max:</label>
          <input id="max" disabled className={field + ' w-[70px]'} />
        </div>
        <div className={row}>
          <label htmlFor="compare" className="w-[147px] pl-2.5">Compare String:</label>
          <input id="compare" className={field + ' w-[250px]'} />
        </div>
        <div className="flex h-[18px] items-center">
          <span className="w-[147px]">Line Actual Min Score:</span>
          <span className="text-[#0000ff]">83.97</span>
        </div>
      </div>
    </fieldset>
  );
}

function ScoreThreshold() {
  return (
    <div className="mt-[33px]">
      <fieldset className="ml-0.5 w-[225px] border border-[#a8a8a8] pb-1 pl-2 shadow-[1px_1px_0_#fff]">
        <legend className="-ml-[5px] px-[3px] leading-4">Minimum Score Threshold</legend>
        <div className="mt-3 flex h-4 items-center">
          <span className="relative h-[13px] w-[13px]">
            <input id="enable" type="checkbox" defaultChecked className="block h-[13px] w-[13px] appearance-none border border-[#222] bg-white" />
            <svg width="13" height="13" viewBox="0 0 13 13" className="pointer-events-none absolute left-0 top-0"><path d="M2.500 6.500l3 3 5-6" fill="none" stroke="#222" strokeWidth="1.200" /></svg>
          </span>
          <label htmlFor="enable" className="ml-1">Enable</label>
        </div>
        <div className="mt-2.5 flex h-5 items-center">
          <label htmlFor="score" className="w-[139px] whitespace-nowrap">Min Character Score:</label>
          <input id="score" defaultValue="50.00" className="h-5 w-[57px] border border-[#abadb3] bg-white pr-1 text-right outline-none" />
        </div>
      </fieldset>
      <p className="mt-6 leading-[18px] text-[#0000ff]">Tool is working in Recognition mode</p>
      <p className="mt-1.5 leading-[18px] text-[#0000ff]">Multicore Processing Disabled</p>
    </div>
  );
}

function SetupPane() {
  return (
    <section className="mr-[5px] mt-[3px] min-h-0 grow border border-l-2 border-t-2 border-[#73777f] pl-[5px] pt-[5px]">
      <nav className="flex items-center">
        <Step>General</Step><StepArrow />
        <Step>Search</Step><StepArrow />
        <Step>Train</Step><StepArrow />
        <Step active>Verification</Step><StepArrow />
        <Step>Display</Step>
      </nav>
      <div className="mt-2.5 flex h-[18px] items-center pl-[7px]">
        <span className="w-[67px]">Pass/Fail:</span>
        <span className="w-20 text-[#00b400]">Passed</span>
        <span className="w-[43px]">Read:</span>
        <span className="text-[#0000ff]">{'abcd%$#;&*><>?/};{|\\+@~('}</span>
      </div>
      <div className="flex items-start gap-2 pl-[7px]">
        <LineSettings />
        <ScoreThreshold />
      </div>
    </section>
  );
}

function BottomTabs() {
  return (
    <div className="-ml-1 mr-1 flex h-[30px] shrink-0 items-start" role="tablist">
      <button type="button" role="tab" aria-selected="true" className="h-[30px] w-[50px] border-b border-r border-[#d9d9d9] bg-white pl-0.5 pt-1.5">Setup</button>
      <div className="flex grow flex-col">
        <div className="h-[5px] bg-white" />
        <div className="flex border-t border-[#d9d9d9]">
          {['Properties', 'Link Summary', 'Info'].map((t) => (
            <button key={t} type="button" role="tab" aria-selected="false" className="h-[23px] border-b border-r border-[#d9d9d9] bg-[#f0f0f0] px-1.5 pb-px">{t}</button>
          ))}
        </div>
      </div>
    </div>
  );
}

export default function App() {
  return (
    <div className="flex h-screen w-full flex-col overflow-hidden bg-[#f0f0f0] font-['Liberation_Sans',Arial,sans-serif] text-[14px] leading-4 text-black">
      <TitleBar />
      <MainToolbar />
      <main className="flex min-h-0 grow border-b-2 border-r-2 border-t border-b-[#808080] border-r-[#808080] border-t-white">
        <div className="flex w-[664px] shrink-0 flex-col pb-0.5">
          <RunToolbar />
          <div className="flex min-h-0 grow gap-[5px] pl-0.5">
            <div className="flex w-[75px] shrink-0 flex-col gap-1">
              <TreePanel />
              <Palette />
            </div>
            <ProgramTable />
          </div>
        </div>
        <div className="ml-0.5 mt-[3px] flex min-w-0 grow flex-col border-l border-[#707070]">
          <div className="mt-1 flex min-h-0 grow flex-col border-t border-[#808080] pl-[5px] pt-0.5">
            <ImagePane />
            <SetupPane />
            <BottomTabs />
            <div className="h-1 shrink-0" />
          </div>
        </div>
      </main>
    </div>
  );
}
